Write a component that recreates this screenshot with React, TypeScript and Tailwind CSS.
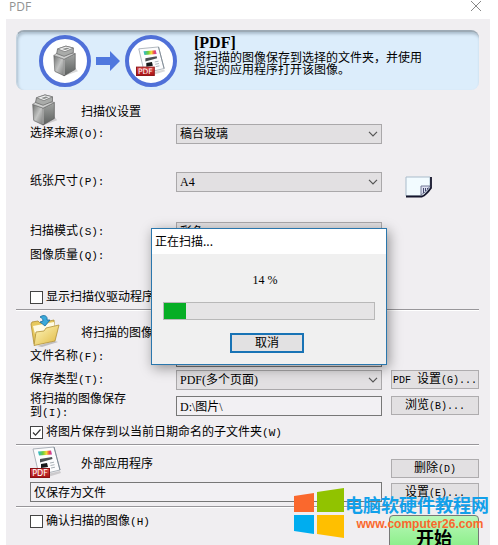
import { useState } from 'react';
import type { ReactNode } from 'react';

const FIELD = 'block h-full w-full appearance-none border px-[3px] text-xs leading-4 text-black outline-none';

function ScannerIcon({ className }: { className: string }) {
  return (
    <svg viewBox="0 0 28 34" className={className} aria-hidden="true">
      <defs>
        <linearGradient id="scanLeft" x1="0" y1="0" x2="1" y2="1">
          <stop offset="0" stopColor="#6f7170" />
          <stop offset="0.5" stopColor="#c3c4c3" />
          <stop offset="1" stopColor="#777978" />
        </linearGradient>
        <linearGradient id="scanRight" x1="0" y1="0" x2="0" y2="1">
          <stop offset="0" stopColor="#a3a5a3" />
          <stop offset="1" stopColor="#5b5e5d" />
        </linearGradient>
      </defs>
      <path d="M3 29 14 33 28 28 25 24Z" fill="#000" opacity="0.15" />
      <path d="M2 11 13 15 13 33 3 28Z" fill="url(#scanLeft)" stroke="#666" strokeWidth="0.7" />
      <path d="M13 15 25 9 25 26 13 33Z" fill="url(#scanRight)" stroke="#555" strokeWidth="0.7" />
      <path d="M2 11 9 6 25 9 13 15Z" fill="#cfd0cf" stroke="#777" strokeWidth="0.7" />
      <path d="M5 9 6 4 15 1 23 3 23 8 13 12Z" fill="#a9aba9" stroke="#666" strokeWidth="0.8" />
      <path d="M6 4 15 1 23 3 14 7Z" fill="#f1f1f1" stroke="#777" strokeWidth="0.8" />
      <path d="M11 4.200 16 2.700 19 3.500 14 5.200Z" fill="#8a8c8a" />
      <path d="M13 15.500V32" stroke="#dedede" strokeWidth="0.8" />
    </svg>
  );
}

function PdfIcon({ className }: { className: string }) {
  return (
    <svg viewBox="0 0 32 32" className={className} aria-hidden="true">
      <defs>
        <linearGradient id="rainbow">
          <stop offset="0" stopColor="#29b6dd" />
          <stop offset="0.35" stopColor="#6ccc3c" />
          <stop offset="0.6" stopColor="#f4dc36" />
          <stop offset="0.8" stopColor="#ee4a4a" />
          <stop offset="1" stopColor="#c03bbd" />
        </linearGradient>
        <linearGradient id="pdfRed" x1="0" y1="0" x2="0" y2="1">
          <stop offset="0" stopColor="#e04a48" />
          <stop offset="1" stopColor="#a50f12" />
        </linearGradient>
      </defs>
      <path d="M13 29 30 25 31 27 18 31Z" fill="#000" opacity="0.15" />
      <path d="M3 3 24 1 30 24 9 29Z" fill="#fcfcfd" stroke="#aeb4bb" strokeWidth="1" />
      <path d="M24 1 30 24" stroke="#7f8b95" strokeWidth="1" />
      <path d="M8 5.500 21 4.500 22 8.500 9 9.500Z" fill="url(#rainbow)" />
      <path d="M10 13 22 11 22.500 13 10 16.500Z" fill="#4b5053" />
      <path d="M11 18 17 17 18 21 11 22Z" fill="#17191a" />
      <path d="m20 17 4-.8M20.500 19.500l4-.8M21 22l4-.8" stroke="#a9b1b7" strokeWidth="1" />
      <rect x="0.500" y="22.500" width="19" height="9" fill="url(#pdfRed)" stroke="#8b1113" />
      <text x="10" y="30" textAnchor="middle" fill="#fff" fontSize="8" fontFamily="'DejaVu Sans', sans-serif">PDF</text>
    </svg>
  );
}

function FolderIcon({ className }: { className: string }) {
  return (
    <svg viewBox="0 0 30 32" className={className} aria-hidden="true">
      <defs>
        <linearGradient id="folderFront" x1="0" y1="0" x2="1" y2="1">
          <stop offset="0" stopColor="#fff8c0" />
          <stop offset="1" stopColor="#e0b840" />
        </linearGradient>
      </defs>
      <path d="M7 31 25 26 28 27 12 32Z" fill="#000" opacity="0.2" />
      <path d="M1 9 2 7 8 6 10 8 24 5 25 20 4 29Z" fill="#e7c95f" stroke="#b08f36" strokeWidth="0.8" />
      <path d="M3 11 24 7 25 14 5 19Z" fill="#fffbe4" />
      <path d="M4 30.500 6 17 14 16 16 13 29 10 25 26Z" fill="url(#folderFront)" stroke="#b08f36" strokeWidth="0.8" />
      <path d="M10 2C14 -1 18 1 17 5L20 5 15 11 10 7 13 6C13 4 12 3 10 2Z" fill="#3aa9da" stroke="#176b9c" strokeWidth="0.8" />
    </svg>
  );
}

function PaperIcon() {
  return (
    <svg viewBox="0 0 27 22" className="h-[22px] w-[27px]" aria-hidden="true">
      <path d="M1 1H25V12L18 20H1Z" fill="#f2fbff" stroke="#a9bccb" />
      <path d="M1 20.500H17Q21 19 26 12V1" fill="none" stroke="#15152c" strokeWidth="1.800" />
      <path d="M16 19V10H25Q22 16 16 19Z" fill="#dcdff0" stroke="#757a97" />
      <path d="M18.500 12V17M20.500 12V15M22.500 12V13" stroke="#42476b" />
    </svg>
  );
}

// Latin part of a caption, set at about half the width of a Chinese character
function Latin({ children, small = false }: { children: ReactNode; small?: boolean }) {
  return (
    <span className={`font-['Liberation_Mono','Noto_Sans_CJK_SC',monospace] ${small ? 'text-[10px]' : 'text-[11px]'}`}>
      {children}
    </span>
  );
}

function Row({ id, label, hotkey, side, children }: { id: string; label: string; hotkey: string; side?: ReactNode; children: ReactNode }) {
  return (
    <div className="flex h-5 items-center pl-[14px]">
      <label htmlFor={id} className="w-[146px] shrink-0 pr-10 leading-[13px]">
        {label}<Latin>({hotkey}):</Latin>
      </label>
      <div className="h-5 min-w-0 flex-1">{children}</div>
      <div className="ml-[9px] flex h-5 w-[88px] shrink-0 items-start">{side}</div>
    </div>
  );
}

function Select({ id, options }: { id: string; options: string[] }) {
  return (
    <div className="relative h-full">
      <select id={id} className={`${FIELD} border-[#aaa8aa] bg-[#e2e0e2]`}>
        {options.map(o => <option key={o}>{o}</option>)}
      </select>
      <svg viewBox="0 0 10 6" className="pointer-events-none absolute top-[7px] right-1 h-1.5 w-2.5" aria-hidden="true">
        <path d="m1 .8 4 4 4-4" fill="none" stroke="#555" strokeWidth="1.200" />
      </svg>
    </div>
  );
}

function PushButton({ children }: { children: ReactNode }) {
  return (
    <button type="button" className="block h-[19px] w-[88px] shrink-0 border border-[#aeacae] bg-[#e2e0e2] leading-4 whitespace-nowrap">
      {children}
    </button>
  );
}

function CheckRow({ label, hotkey, initial = false }: { label: string; hotkey?: string; initial?: boolean }) {
  const [on, setOn] = useState(initial);
  return (
    <label className="ml-[14px] flex h-5 items-center gap-[3px] whitespace-nowrap">
      <span className="relative size-[13px]">
        <input
          type="checkbox"
          checked={on}
          onChange={e => setOn(e.target.checked)}
          className="block size-[13px] appearance-none border border-[#444] bg-white"
        />
        {on && (
          <svg viewBox="0 0 13 13" className="pointer-events-none absolute inset-0" aria-hidden="true">
            <path d="m3 6.500 2.500 2.700L10.500 3.500" fill="none" stroke="#333" strokeWidth="1.200" />
          </svg>
        )}
      </span>
      <span>{label}{hotkey && <Latin>({hotkey})</Latin>}</span>
    </label>
  );
}

function SectionTitle({ icon, title, action }: { icon: ReactNode; title: string; action?: ReactNode }) {
  return (
    <div className="flex items-center pl-[14px]">
      <div className="w-[51px] shrink-0">{icon}</div>
      <h2 className="flex-1 pt-1">{title}</h2>
      {action && <div className="self-end">{action}</div>}
    </div>
  );
}

function Divider() {
  return <hr className="h-0.5 border-0 border-t border-[#98969a] bg-white" />;
}

function ScanDialog({ percent }: { percent: number }) {
  return (
    <div role="dialog" aria-label="正在扫描..." className="absolute top-[228px] left-[151px] w-[236px] border border-[#2a77ad] bg-[#f0f0f0] shadow-[2px_3px_12px_rgba(0,0,0,0.4)]">
      <div className="h-[25px] bg-white px-[3px] font-['Noto_Sans_CJK_SC',sans-serif] leading-6">正在扫描...</div>
      <div className="px-[11px] pt-[18px] pb-[11px]">
        <p className="pr-2 text-center leading-4">{percent} %</p>
        <div role="progressbar" aria-valuenow={percent} className="mt-[14px] h-[18px] w-full border border-[#b8b8b8] bg-[#e5e4e5]">
          <div className="h-full bg-[#06ae25]" style={{ width: `${percent * 0.75}%` }} />
        </div>
        <div className="pr-1 text-center">
          <button type="button" className="mt-[13px] h-5 w-[74px] border-2 border-[#1873b5] bg-[#e2e1e2] leading-4">取消</button>
        </div>
      </div>
    </div>
  );
}

function Watermark() {
  return (
    <div className="pointer-events-none absolute top-[488px] right-[9px] flex gap-px">
      <svg viewBox="0 0 50 50" className="size-[50px]" aria-hidden="true">
        <path d="M0 8 20 5V24H0Z" fill="#fa682d" />
        <path d="M23 4 50 0V24H23Z" fill="#91c300" />
        <path d="M0 27H20V46L0 43Z" fill="#00adef" />
        <path d="M23 27H50V50L23 46Z" fill="#ffbf00" />
      </svg>
      <div className="flex flex-col items-center pt-1">
        <span className="font-['Noto_Sans_CJK_SC',sans-serif] text-lg leading-6 font-bold whitespace-nowrap text-[#12a0ea]">电脑软硬件教程网</span>
        <span className="pl-1.5 font-['Liberation_Sans',sans-serif] text-xs leading-4 font-bold text-[#fa682d]">www.computer26.com</span>
      </div>
    </div>
  );
}

export default function App() {
  return (
    <div className="relative flex h-screen flex-col overflow-hidden bg-white font-['Liberation_Serif','Noto_Sans_CJK_SC',serif] text-xs text-black">
      <header className="flex h-[19px] shrink-0 items-start justify-between pr-4 pl-[9px]">
        <h1 className="font-['Open_Sans',sans-serif] leading-[14px] text-[#929292]">PDF</h1>
        <button type="button" aria-label="关闭">
          <svg viewBox="0 0 12 12" className="size-3" aria-hidden="true">
            <path d="m1 1 10 10M11 1 1 11" stroke="#888" strokeWidth="1" />
          </svg>
        </button>
      </header>

      <main className="mr-2 ml-[6px] flex-1 bg-[#f0eef1] pt-[11px] pr-[11px] pl-[10px]">
        <section className="flex h-[60px] items-center rounded-lg border-t-2 border-l border-[#9daab5] border-l-[#c3d2de] bg-[#dcedfb] pl-[22px] shadow-[inset_1px_2px_3px_#aabccb]">
          <div className="flex size-[52px] items-center justify-center rounded-full border-4 border-[#4f70d8] bg-white">
            <ScannerIcon className="h-8 w-[26px]" />
          </div>
          <svg viewBox="0 0 24 20" className="mx-[5px] h-5 w-6" aria-hidden="true">
            <path d="M0 6H14V0L24 10 14 20V14H0Z" fill="#5078de" />
          </svg>
          <div className="flex size-[52px] items-center justify-center rounded-full border-4 border-[#4f70d8] bg-white">
            <PdfIcon className="size-[30px]" />
          </div>
          <div className="ml-[17px] min-w-0 flex-1 pr-12 pb-3">
            <p className="text-base leading-[18px] font-bold">[PDF]</p>
            <p className="leading-3">将扫描的图像保存到选择的文件夹，并使用指定的应用程序打开该图像。</p>
          </div>
        </section>

        <div className="pt-1">
          <SectionTitle icon={<ScannerIcon className="h-8 w-7" />} title="扫描仪设置" />
        </div>
        <div className="-mt-0.5">
          <Row id="source" label="选择来源" hotkey="O"><Select id="source" options={['稿台玻璃']} /></Row>
        </div>
        <div className="mt-7">
          <Row id="size" label="纸张尺寸" hotkey="P" side={<div className="pt-1 pl-[14px]"><PaperIcon /></div>}>
            <Select id="size" options={['A4']} />
          </Row>
        </div>
        <div className="mt-[30px] space-y-1">
          <Row id="mode" label="扫描模式" hotkey="S"><Select id="mode" options={['彩色']} /></Row>
          <Row id="quality" label="图像质量" hotkey="Q"><Select id="quality" options={['']} /></Row>
        </div>
        <div className="mt-[21px] mb-0.5"><CheckRow label="显示扫描仪驱动程序" /></div>
        <Divider />

        <div className="pt-1">
          <SectionTitle icon={<FolderIcon className="h-8 w-[30px]" />} title="将扫描的图像" />
        </div>
        <Row id="name" label="文件名称" hotkey="F">
          <input id="name" type="text" className={`${FIELD} border-[#777] bg-[#f2f0f3]`} />
        </Row>
        <div className="mt-[3px]">
          <Row id="type" label="保存类型" hotkey="T" side={<PushButton><Latin small>PDF </Latin>设置<Latin small>(G)...</Latin></PushButton>}>
            <Select id="type" options={['PDF(多个页面)']} />
          </Row>
        </div>
        <div className="mt-1.5">
          <Row id="folder" label="将扫描的图像保存到" hotkey="I" side={<PushButton>浏览<Latin small>(B)...</Latin></PushButton>}>
            <input id="folder" type="text" defaultValue="D:\图片\" className={`${FIELD} border-[#777] bg-[#f2f0f3]`} />
          </Row>
        </div>
        <div className="mt-1.5 mb-0.5"><CheckRow label="将图片保存到以当前日期命名的子文件夹" hotkey="W" initial /></div>
        <Divider />

        <SectionTitle icon={<PdfIcon className="size-8" />} title="外部应用程序" action={<PushButton>删除<Latin small>(D)</Latin></PushButton>} />
        <div className="my-1 flex h-5 items-center pl-[14px]">
          <input aria-label="外部应用程序" type="text" defaultValue="仅保存为文件" className={`${FIELD} min-w-0 flex-1 border-[#777] bg-[#f2f0f3]`} />
          <div className="ml-[9px] shrink-0"><PushButton>设置<Latin small>(E)...</Latin></PushButton></div>
        </div>
        <Divider />
        <div className="flex items-start justify-between pt-[3px]">
          <CheckRow label="确认扫描的图像" hotkey="H" />
          <button type="button" className="mt-1 h-12 w-[90px] rounded border border-[#777] bg-linear-to-b from-[#baf7b9] to-[#70ea70] text-lg leading-6 font-bold">
            开始
          </button>
        </div>
      </main>

      <ScanDialog percent={14} />
      <Watermark />
    </div>
  );
}
